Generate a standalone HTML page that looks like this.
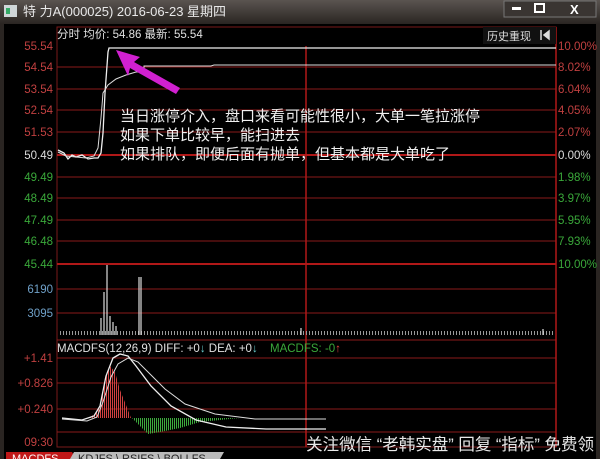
<!DOCTYPE html>
<html><head><meta charset="utf-8"><style>
body{margin:0;background:#000;width:600px;height:459px;overflow:hidden}
svg{display:block;font-family:"Liberation Sans","Noto Sans CJK SC",sans-serif}
</style></head><body>
<svg width="600" height="459" viewBox="0 0 600 459">
<defs>
<linearGradient id="tb" x1="0" y1="0" x2="0" y2="1"><stop offset="0" stop-color="#5a5450"/><stop offset="1" stop-color="#2a2522"/></linearGradient>
<pattern id="vb" width="3" height="10" patternUnits="userSpaceOnUse"><rect x="0" y="0" width="1" height="10" fill="#999"/></pattern>
<pattern id="rb" width="2" height="10" patternUnits="userSpaceOnUse"><rect x="0" y="0" width="1" height="10" fill="#d04040"/></pattern>
<pattern id="gb" width="2" height="10" patternUnits="userSpaceOnUse"><rect x="0" y="0" width="1" height="10" fill="#3caa3c"/></pattern>
</defs>
<rect width="600" height="459" fill="#000"/>
<rect width="600" height="24" fill="url(#tb)"/>
<rect x="0" y="24" width="4" height="435" fill="#2a2522"/>
<rect x="596" y="24" width="4" height="435" fill="#2a2522"/>
<rect x="4" y="5" width="13" height="12" fill="#cfd6d8"/><rect x="6" y="8" width="4" height="6" fill="#3a6"/>
<text x="23" y="16" font-size="13" fill="#e8e8e8">特 力A(000025) 2016-06-23 星期四</text>
<rect x="504" y="1" width="92" height="16" fill="#3a3532" stroke="#777" stroke-width="1"/>
<rect x="512" y="7" width="9" height="3" fill="#fff"/>
<rect x="535" y="4" width="9" height="8" fill="none" stroke="#fff" stroke-width="2"/>
<text x="570" y="14" font-size="13" fill="#fff" font-weight="bold">X</text>
<rect x="57" y="27" width="499" height="420" fill="none" stroke="#7a1a1a"/>
<g stroke="#8a1a1a" stroke-width="1">
<line x1="57" y1="67" x2="556" y2="67"/><line x1="57" y1="89" x2="556" y2="89"/>
<line x1="57" y1="110" x2="556" y2="110"/><line x1="57" y1="132" x2="556" y2="132"/>
<line x1="57" y1="177" x2="556" y2="177"/><line x1="57" y1="198" x2="556" y2="198"/>
<line x1="57" y1="220" x2="556" y2="220"/><line x1="57" y1="241" x2="556" y2="241"/>
<line x1="57" y1="289" x2="556" y2="289"/><line x1="57" y1="313" x2="556" y2="313"/>
<line x1="57" y1="340" x2="556" y2="340"/>
<line x1="57" y1="358" x2="556" y2="358"/><line x1="57" y1="383" x2="556" y2="383"/>
<line x1="57" y1="409" x2="556" y2="409"/><line x1="57" y1="432" x2="556" y2="432"/>
</g>
<g stroke="#b01818" stroke-width="2">
<line x1="57" y1="155" x2="556" y2="155"/><line x1="57" y1="264" x2="556" y2="264"/>
<line x1="306" y1="46" x2="306" y2="447" stroke-width="1.5"/>
</g>
<line x1="556" y1="27" x2="556" y2="447" stroke="#b01818" stroke-width="1.5"/>
<text x="57" y="38" font-size="11.5" fill="#e0e0e0">分时 均价: 54.86 最新: 55.54</text>
<rect x="483" y="27" width="73" height="17" fill="#111"/>
<text x="487" y="40" font-size="11" fill="#ddd">历史重现</text>
<path d="M541 30v10M544 35l5-4v8z" stroke="#ddd" fill="#ddd" stroke-width="1.5"/>
<g font-size="11.5" fill="#c04040">
<text x="53" y="50" text-anchor="end">55.54</text><text x="53" y="71" text-anchor="end">54.54</text>
<text x="53" y="93" text-anchor="end">53.54</text><text x="53" y="114" text-anchor="end">52.54</text>
<text x="53" y="136" text-anchor="end">51.53</text>
<text x="558" y="50">10.00%</text><text x="558" y="71">8.02%</text><text x="558" y="93">6.04%</text>
<text x="558" y="114">4.05%</text><text x="558" y="136">2.07%</text>
</g>
<text x="53" y="159" font-size="11.5" fill="#ddd" text-anchor="end">50.49</text>
<text x="558" y="159" font-size="11.5" fill="#ddd">0.00%</text>
<g font-size="11.5" fill="#3aa83a">
<text x="53" y="181" text-anchor="end">49.49</text><text x="53" y="202" text-anchor="end">48.49</text>
<text x="53" y="224" text-anchor="end">47.49</text><text x="53" y="245" text-anchor="end">46.48</text>
<text x="53" y="268" text-anchor="end">45.44</text>
<text x="558" y="181">1.98%</text><text x="558" y="202">3.97%</text><text x="558" y="224">5.95%</text>
<text x="558" y="245">7.93%</text><text x="558" y="268">10.00%</text>
</g>
<g font-size="11.5" fill="#6fa0c8"><text x="53" y="293" text-anchor="end">6190</text><text x="53" y="317" text-anchor="end">3095</text></g>
<path d="M58 150l6 3 4 6 4-4 4 2 6-2 6 4 6-1 4 0 3-5 2-20 2-40 3-41 1-4 H556" fill="none" stroke="#eee" stroke-width="1.3"/>
<path d="M58 152l8 4 10 1 10 1 8-2 4-8 3-30 2-25 5-8 8-6 10-4 10-3 H144 l0-6 H211 l3-1 H556" fill="none" stroke="#ddd" stroke-width="1"/>
<path d="M116 50l24 7-6 5 46 26-4 6-46-26-2 8z" fill="#d020d0"/>
<g font-size="15" fill="#f0f0f0">
<text x="120" y="121">当日涨停介入，盘口来看可能性很小，大单一笔拉涨停</text>
<text x="120" y="140">如果下单比较早，能扫进去</text>
<text x="120" y="159">如果排队，即便后面有抛单，但基本都是大单吃了</text>
</g>
<rect x="58" y="331" width="495" height="4" fill="url(#vb)"/>
<g stroke="#ddd" stroke-width="1.2">
<line x1="107" y1="265" x2="107" y2="335"/><line x1="104" y1="292" x2="104" y2="335"/>
<line x1="101" y1="318" x2="101" y2="335"/><line x1="110" y1="316" x2="110" y2="335"/>
<line x1="113" y1="322" x2="113" y2="335"/><line x1="116" y1="326" x2="116" y2="335"/>
<line x1="139" y1="277" x2="139" y2="335"/><line x1="141" y1="277" x2="141" y2="335"/>
<line x1="301" y1="328" x2="301" y2="335"/><line x1="543" y1="329" x2="543" y2="335"/>
</g>
<text x="57" y="352" font-size="11.5" fill="#e0e0e0">MACDFS(12,26,9) DIFF: +0<tspan fill="#6cc">↓</tspan> DEA: +0<tspan fill="#6cc">↓</tspan></text>
<text x="270" y="352" font-size="11.5" fill="#3aa83a">MACDFS: -0<tspan fill="#e04040">↑</tspan></text>
<g font-size="11.5" fill="#c04040">
<text x="53" y="362" text-anchor="end">+1.41</text><text x="53" y="387" text-anchor="end">+0.826</text>
<text x="53" y="413" text-anchor="end">+0.240</text><text x="53" y="446" text-anchor="end">09:30</text>
</g>
<path d="M88 418L95 414 100 405 105 378 110 366 115 372 120 390 126 405 131 418z" fill="url(#rb)"/>
<path d="M132 418L140 426 148 434 160 432 180 428 200 422 240 418z" fill="url(#gb)"/>
<path d="M62 418l20 2 12-4 6-10 6-30 7-18 7-4 8 2 8 10 15 20 20 20 25 14 30 7 40 2 H326" fill="none" stroke="#eee" stroke-width="1.3"/>
<path d="M62 419l25 2 10-4 6-15 8-25 7-13 10-6 10 4 12 12 15 15 20 15 30 10 40 5 H326" fill="none" stroke="#ddd" stroke-width="1"/>
<path d="M6 452h66l4 7H6z" fill="#c01818"/><text x="12" y="462" font-size="11" fill="#fff">MACDFS</text>
<path d="M74 452h150l-4 7H70z" fill="#bbb"/><text x="78" y="462" font-size="11" fill="#222">KDJFS \ RSIFS \ BOLLFS</text>
<text x="594" y="450" font-size="16.5" fill="#e8e8e8" text-anchor="end">关注微信 “老韩实盘” 回复 “指标” 免费领</text>
</svg>
</body></html>
